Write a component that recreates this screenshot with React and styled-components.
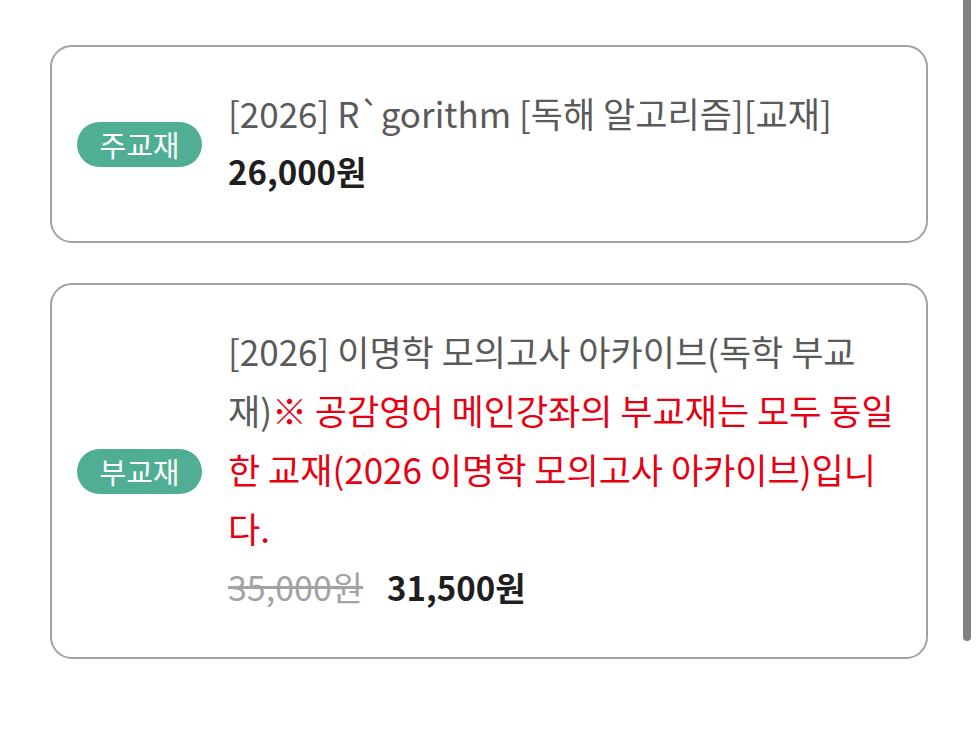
import React from 'react';
import styled, { createGlobalStyle } from 'styled-components';

const GlobalStyle = createGlobalStyle`
  html, body {
    margin: 0;
    padding: 0;
    background: #ffffff;
  }
  body {
    font-family: "Noto Sans CJK KR", "Noto Sans", sans-serif;
  }
`;

const Page = styled.div`
  display: flex;
  flex-direction: column;
  gap: 40px;
  padding: 45px 51px 0 50px;
`;

const Card = styled.div`
  display: flex;
  align-items: center;
  box-sizing: border-box;
  border: 2px solid #a2a2a2;
  border-radius: 22px;
  padding: 36px 32px 40px 25px;
`;

const Badge = styled.span`
  flex-shrink: 0;
  display: flex;
  align-items: center;
  justify-content: center;
  width: 125px;
  height: 45px;
  margin: 4px 26px 0 0;
  border-radius: 23px;
  background: #4fae94;
  color: #ffffff;
  font-size: 29px;
  line-height: 1;
`;

const Info = styled.div`
  flex: 1;
  min-width: 0;
  font-size: 35px;
  line-height: 59px;
`;

const Title = styled.div`
  color: #5a5a5a;
`;

const Notice = styled.span`
  color: #e60012;
`;

const PriceRow = styled.div`
  display: flex;
  align-items: baseline;
  gap: 24px;
`;

const Price = styled.span`
  color: ${(p) => (p.$old ? '#a3a3a3' : '#1f1f1f')};
  font-size: ${(p) => (p.$old ? '34px' : '33px')};
  font-weight: ${(p) => (p.$old ? 400 : 700)};
  text-decoration: ${(p) => (p.$old ? 'line-through' : 'none')};
`;

const ScrollThumb = styled.div`
  position: fixed;
  top: 0;
  right: 8px;
  width: 8px;
  height: 641px;
  border-radius: 0 0 4px 4px;
  background: #808080;
`;

const books = [
  {
    tag: '주교재',
    title: '[2026] R`gorithm [독해 알고리즘][교재]',
    price: '26,000원',
  },
  {
    tag: '부교재',
    title: '[2026] 이명학 모의고사 아카이브(독학 부교재)',
    notice: '※ 공감영어 메인강좌의 부교재는 모두 동일한 교재(2026 이명학 모의고사 아카이브)입니다.',
    oldPrice: '35,000원',
    price: '31,500원',
  },
];

const App = () => {
  return (
    <>
      <GlobalStyle />
      <Page>
        {books.map((book) => (
          <Card key={book.tag}>
            <Badge>{book.tag}</Badge>
            <Info>
              <Title>
                {book.title}
                {book.notice && <Notice>{book.notice}</Notice>}
              </Title>
              <PriceRow>
                {book.oldPrice && <Price $old>{book.oldPrice}</Price>}
                <Price>{book.price}</Price>
              </PriceRow>
            </Info>
          </Card>
        ))}
      </Page>
      <ScrollThumb />
    </>
  );
};

export default App;
